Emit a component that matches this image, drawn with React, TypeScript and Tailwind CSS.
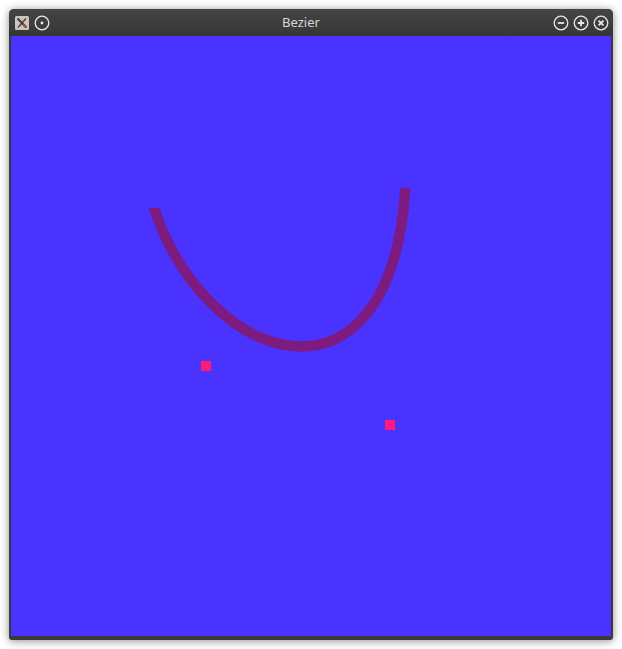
import React from 'react';

const CircleBtn: React.FC<{ kind: 'dot' | 'minus' | 'plus' | 'close' }> = ({ kind }) => (
  <svg width="16" height="16" viewBox="0 0 16 16" className="block">
    <circle cx="8" cy="8" r="6.8" fill="none" stroke="#e8e8e8" strokeWidth="1.3" />
    {kind === 'dot' && <circle cx="8" cy="8" r="1.4" fill="#e8e8e8" />}
    {kind === 'minus' && <path d="M4.8 8h6.4" stroke="#e8e8e8" strokeWidth="1.8" />}
    {kind === 'plus' && <path d="M4.8 8h6.4M8 4.8v6.4" stroke="#e8e8e8" strokeWidth="1.8" />}
    {kind === 'close' && <path d="M5.6 5.6l4.8 4.8M10.4 5.6l-4.8 4.8" stroke="#e8e8e8" strokeWidth="1.9" />}
  </svg>
);

const XLogo = () => (
  <svg width="14" height="14" viewBox="0 0 14 14" className="block">
    <rect x="0" y="0" width="14" height="14" rx="1.5" fill="#c9c6c0" />
    <path d="M2.5 2.5L11.5 11.5" stroke="#3a3a3a" strokeWidth="2" />
    <path d="M11 2.5L3 11.5" stroke="#3a3a3a" strokeWidth="1.2" />
    <path d="M8 9l2.5 2.5" stroke="#d9502a" strokeWidth="1.8" />
  </svg>
);

export default function App() {
  const p0 = [143, 172];
  const p1 = [195, 330];
  const p2 = [379, 389];
  const p3 = [394.5, 152];
  return (
    <div className="w-[622px] h-[649px] bg-white pt-[9px] pl-[9px]">
      <div className="w-[604px] rounded-t-[5px] rounded-b-[3px] bg-[#3a3a3a] shadow-[0_1px_8px_rgba(0,0,0,0.45)] flex flex-col pl-[2px] pr-[1px] pb-[4px]">
        <div className="relative h-[27px] -ml-[2px] -mr-[1px] rounded-t-[5px] bg-gradient-to-b from-[#454545] to-[#363636] flex items-center pl-[6px] pr-[4px]">
          <div className="flex items-center gap-[5px]">
            <XLogo />
            <CircleBtn kind="dot" />
          </div>
          <div className="absolute inset-0 flex items-center justify-center pr-[20px] text-[13px] text-[#d6d6d6] font-['Noto_Sans',sans-serif]">
            Bezier
          </div>
          <div className="ml-auto flex items-center gap-[4px]">
            <CircleBtn kind="minus" />
            <CircleBtn kind="plus" />
            <CircleBtn kind="close" />
          </div>
        </div>
        <div className="w-[600px] h-[600px] bg-[#4b33ff]">
          <svg width="600" height="600" viewBox="0 0 600 600" className="block">
            <defs>
              <clipPath id="curveClip">
                <rect x="0" y={p0[1]} width="270" height="600" />
                <rect x="270" y={p3[1]} width="330" height="600" />
              </clipPath>
            </defs>
            <path
              d={`M${p0[0]} ${p0[1]} C${p1[0]} ${p1[1]} ${p2[0]} ${p2[1]} ${p3[0]} ${p3[1]}`}
              fill="none"
              stroke="#7d1b80"
              strokeWidth="10.5"
              strokeLinecap="square"
              clipPath="url(#curveClip)"
            />
            <rect x={p1[0] - 5} y={p1[1] - 5} width="10" height="10" fill="#ff1a7a" />
            <rect x={p2[0] - 5} y={p2[1] - 5} width="10" height="10" fill="#ff1a7a" />
          </svg>
        </div>
      </div>
    </div>
  );
}
